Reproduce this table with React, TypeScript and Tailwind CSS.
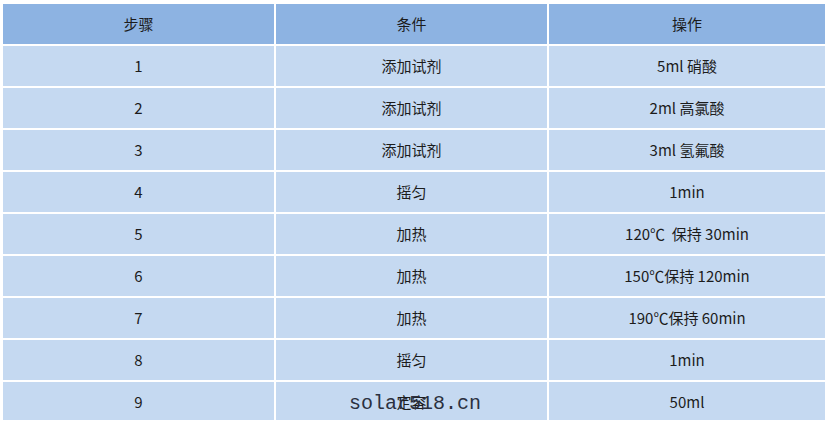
const header = ['步骤', '条件', '操作'];

const rows: [string, string, string][] = [
  ['1', '添加试剂', '5ml 硝酸'],
  ['2', '添加试剂', '2ml 高氯酸'],
  ['3', '添加试剂', '3ml 氢氟酸'],
  ['4', '摇匀', '1min'],
  ['5', '加热', '120℃  保持 30min'],
  ['6', '加热', '150℃保持 120min'],
  ['7', '加热', '190℃保持 60min'],
  ['8', '摇匀', '1min'],
  ['9', '定容', '50ml'],
];

export default function App() {
  return (
    <div className="w-[830px] h-[425px] bg-white pl-[3px] pt-[4px] overflow-hidden">
      <div
        className="relative grid grid-cols-[271px_271px_276px] gap-[2px] text-[15px] text-[#1c1c1c] whitespace-pre"
        style={{ fontFamily: '"Noto Sans CJK SC", "Noto Sans", sans-serif' }}
      >
        {header.map((h) => (
          <div key={h} className="h-[40px] bg-[#8db3e2] flex items-center justify-center">
            {h}
          </div>
        ))}
        {rows.map((r, i) =>
          r.map((c, j) => (
            <div
              key={`${i}-${j}`}
              className={`${i === rows.length - 1 ? 'h-[38px] pt-[3px]' : 'h-[40px]'} bg-[#c5d9f1] flex items-center justify-center`}
            >
              {c}
            </div>
          ))
        )}
        {/* watermark over the last row */}
        <div
          className="absolute left-[346px] top-[390px] text-[20px] text-[#2b3040] leading-none"
          style={{ fontFamily: '"Liberation Mono", monospace' }}
        >
          solar518.cn
        </div>
      </div>
    </div>
  );
}
